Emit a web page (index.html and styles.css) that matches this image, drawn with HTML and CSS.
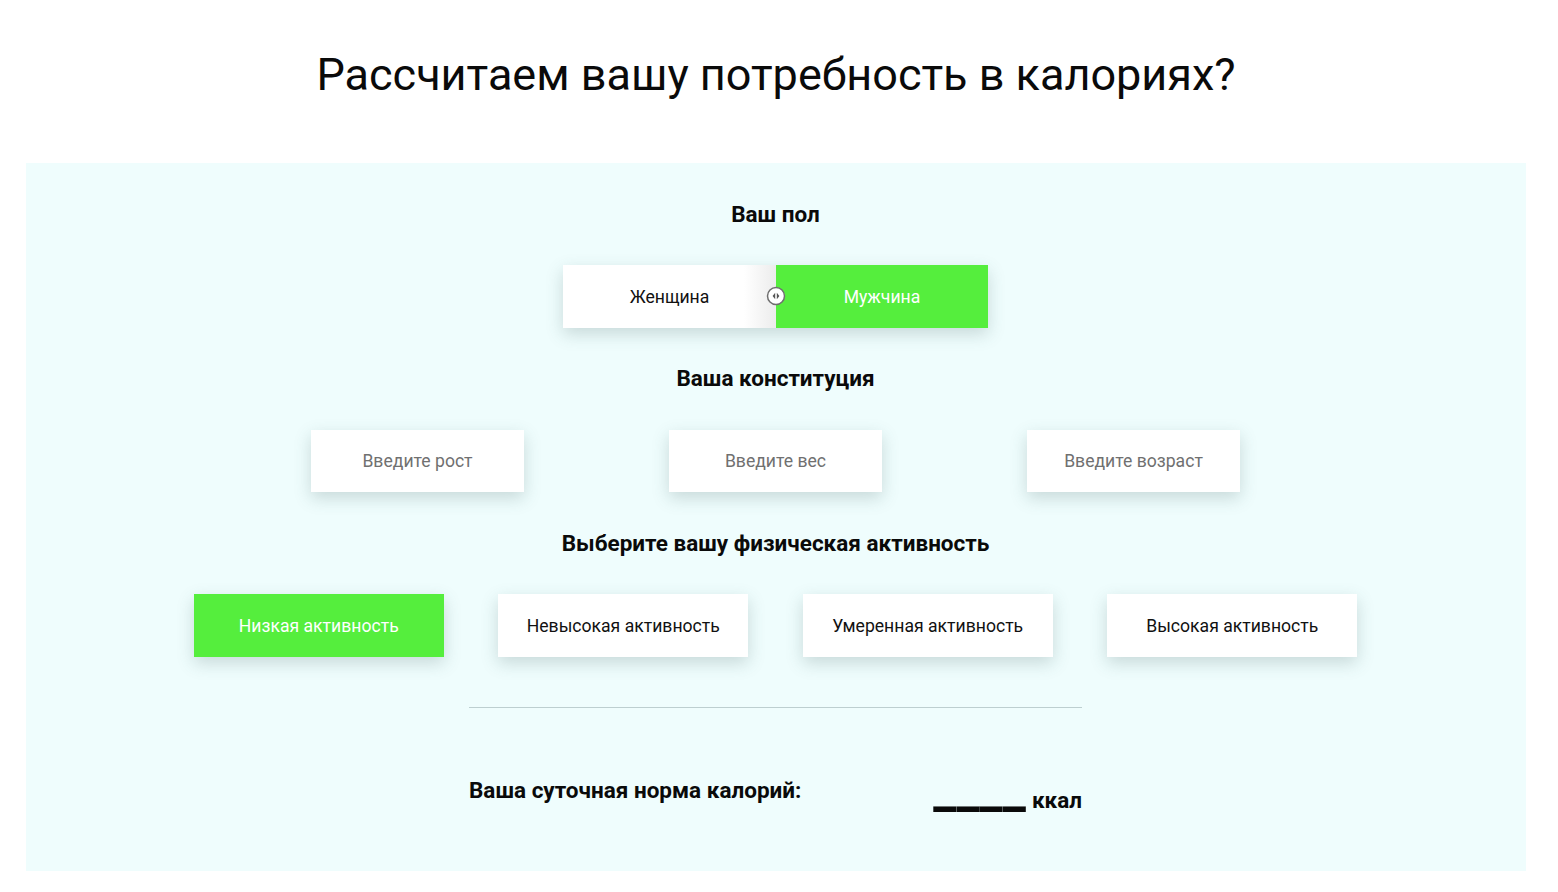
FILE: index.html
```html
<!DOCTYPE html>
<html lang="ru">
<head>
<meta charset="utf-8">
<title>Калькулятор калорий</title>
<link rel="stylesheet" href="styles.css">
</head>
<body>
<h1 class="title">Рассчитаем вашу потребность в калориях?</h1>
<section class="panel">
  <h2 class="heading">Ваш пол</h2>
  <div class="toggle">
    <div class="toggle-opt toggle-left">Женщина</div>
    <div class="toggle-opt toggle-right active">Мужчина</div>
    <svg class="knob" width="20" height="20" viewBox="0 0 20 20">
      <circle cx="10" cy="10" r="8.5" fill="#fff" stroke="#6f6f6f" stroke-width="1.5"/>
      <path d="M9.2 6.8 L6.6 10 L9.2 13.2 Z" fill="#555"/>
      <path d="M10.8 6.8 L13.4 10 L10.8 13.2 Z" fill="#555"/>
    </svg>
  </div>
  <h2 class="heading">Ваша конституция</h2>
  <div class="inputs">
    <div class="field">Введите рост</div>
    <div class="field">Введите вес</div>
    <div class="field">Введите возраст</div>
  </div>
  <h2 class="heading">Выберите вашу физическая активность</h2>
  <div class="activities">
    <div class="btn active">Низкая активность</div>
    <div class="btn">Невысокая активность</div>
    <div class="btn">Умеренная активность</div>
    <div class="btn">Высокая активность</div>
  </div>
  <div class="divider"></div>
  <div class="result">
    <div class="result-label">Ваша суточная норма калорий:</div>
    <div class="result-value"><span class="blank">____</span><span class="unit">ккал</span></div>
  </div>
</section>
</body>
</html>
```
FILE: styles.css
```css
* { box-sizing: border-box; }
body {
  margin: 0;
  background: #fff;
  font-family: Roboto, "Liberation Sans", Arial, sans-serif;
  color: #111;
}
.title {
  margin: 0;
  padding-top: 48px;
  padding-right: 6px;
  height: 163px;
  text-align: center;
  font-weight: 400;
  font-size: 45px;
  line-height: 54px;
  color: #0a0a0a;
}
.panel {
  margin-left: 26px;
  width: 1500px;
  height: 708px;
  background: #effdfd;
  display: flex;
  flex-direction: column;
  align-items: center;
  padding-top: 39px;
  padding-right: 1px;
}
.heading {
  margin: 0;
  font-size: 22.5px;
  font-weight: 700;
  line-height: 24px;
  text-align: center;
  color: #0a0a0a;
}
.toggle {
  position: relative;
  margin: 39px 0 38px;
  display: flex;
  width: 425px;
  height: 63px;
  box-shadow: 0 6px 16px rgba(60, 90, 90, 0.22);
}
.toggle-opt {
  width: 213px;
  display: flex;
  align-items: center;
  justify-content: center;
  font-size: 17.6px;
}
.toggle-left {
  background: linear-gradient(to right, #fff 85%, #ececec 100%);
  color: #111;
}
.toggle-right { width: 212px; }
.active {
  background: #55ee3d;
  color: #fff;
}
.knob {
  position: absolute;
  left: 203px;
  top: 21px;
}
.inputs {
  display: flex;
  gap: 145px;
  margin: 40px 0 39px;
}
.field {
  width: 213px;
  height: 62px;
  background: #fff;
  display: flex;
  align-items: center;
  justify-content: center;
  font-size: 17.6px;
  color: #707070;
  box-shadow: 0 6px 16px rgba(60, 90, 90, 0.22);
}
.activities {
  display: flex;
  gap: 54.5px;
  margin-top: 39px;
}
.btn {
  width: 250px;
  height: 63px;
  background: #fff;
  display: flex;
  align-items: center;
  justify-content: center;
  font-size: 17.6px;
  color: #111;
  box-shadow: 0 6px 16px rgba(60, 90, 90, 0.22);
}
.btn.active {
  background: #55ee3d;
  color: #fff;
}
.divider {
  width: 613px;
  height: 1px;
  background: #bdcfd0;
  margin-top: 50px;
}
.result {
  width: 613px;
  display: flex;
  justify-content: space-between;
  align-items: flex-start;
  margin-top: 70px;
  font-weight: 700;
  font-size: 22.5px;
  line-height: 24px;
  color: #0a0a0a;
}
.result-value {
  margin-top: 1px;
  display: flex;
  align-items: baseline;
}
.blank {
  font-size: 52px;
  line-height: 24px;
  margin-right: 6px;
  position: relative;
  top: -2px;
}
```
